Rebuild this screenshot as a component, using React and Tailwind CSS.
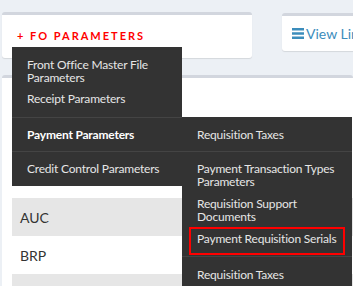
import React from "react";

const font = { fontFamily: "Lato, 'Open Sans', sans-serif" };

export default function App() {
  return (
    <div
      className="relative w-[353px] h-[286px] overflow-hidden bg-[#ecf0f5]"
      style={font}
    >
      {/* top cards */}
      <div className="flex items-start pt-[12px] pl-[2px]">
        <div className="shrink-0 w-[250px] h-[46px] bg-white border-t-[3px] border-[#d2d6de] rounded-[3px] shadow-[0_1px_1px_rgba(0,0,0,0.1)] flex items-center pl-[15px] pb-[1px]">
          <span className="text-[11px] font-bold tracking-[2px] text-[#ff0000]">
            + FO PARAMETERS
          </span>
        </div>
        <div className="shrink-0 ml-[30px] mt-[1px] w-[120px] h-[38px] bg-white border-t-[3px] border-[#d2d6de] rounded-[3px] shadow-[0_1px_1px_rgba(0,0,0,0.1)] flex items-center pl-[10px] whitespace-nowrap">
          <svg width="12" height="11" viewBox="0 0 12 11" className="mr-[2px]">
            <rect x="0" y="0" width="12" height="2.5" fill="#3c8dbc" />
            <rect x="0" y="4.25" width="12" height="2.5" fill="#3c8dbc" />
            <rect x="0" y="8.5" width="12" height="2.5" fill="#3c8dbc" />
          </svg>
          <span className="text-[14px] text-[#3c8dbc]">View Links</span>
        </div>
      </div>

      {/* table card */}
      <div className="mt-[17px] ml-[2px] h-[300px] bg-white border-t-[3px] border-[#d2d6de] rounded-[3px]">
        <div className="pt-[120px] pl-[10px] text-[14px] text-[#333]">
          <div className="h-[38px] bg-[#e6e6e6] flex items-center pl-[8px]">AUC</div>
          <div className="h-[38px] bg-white flex items-center pl-[8px]">BRP</div>
          <div className="h-[38px] bg-[#e6e6e6] flex items-center pl-[8px]"></div>
        </div>
      </div>

      {/* dropdown menu */}
      <div className="absolute left-[12px] top-[47px] w-[170px] bg-[#333] text-[12px] leading-[13px] tracking-[-0.2px] text-[#e6e6e6]">
        <div className="px-[15px] pt-[11px] pb-[12px] border-b border-[#444]">
          <div>Front Office Master File Parameters</div>
          <div className="mt-[8px]">Receipt Parameters</div>
        </div>
        <div className="px-[15px] py-[10px] border-b border-[#444] font-bold text-white whitespace-nowrap">
          Payment Parameters
        </div>
        <div className="px-[15px] pt-[10px] pb-[11px] whitespace-nowrap">Credit Control Parameters</div>
      </div>

      {/* submenu */}
      <div className="absolute left-[182px] top-[117px] w-[170px] h-[180px] bg-[#333] text-[12px] leading-[13px] tracking-[-0.2px] text-[#e6e6e6]">
        <div className="px-[15px] pt-[11px] pb-[10px] border-b border-[#444]">Requisition Taxes</div>
        <div className="pt-[10px] pb-[1px] border-b border-[#444]">
          <div className="px-[15px]">Payment Transaction Types Parameters</div>
          <div className="px-[15px] mt-[9px]">Requisition Support Documents</div>
          <div className="mx-[7px] mt-[4px] border-2 border-[#ff0000] px-[6px] pt-[3px] pb-[8px] whitespace-nowrap">
            Payment Requisition Serials
          </div>
        </div>
        <div className="px-[15px] pt-[11px]">Requisition Taxes</div>
      </div>
    </div>
  );
}
